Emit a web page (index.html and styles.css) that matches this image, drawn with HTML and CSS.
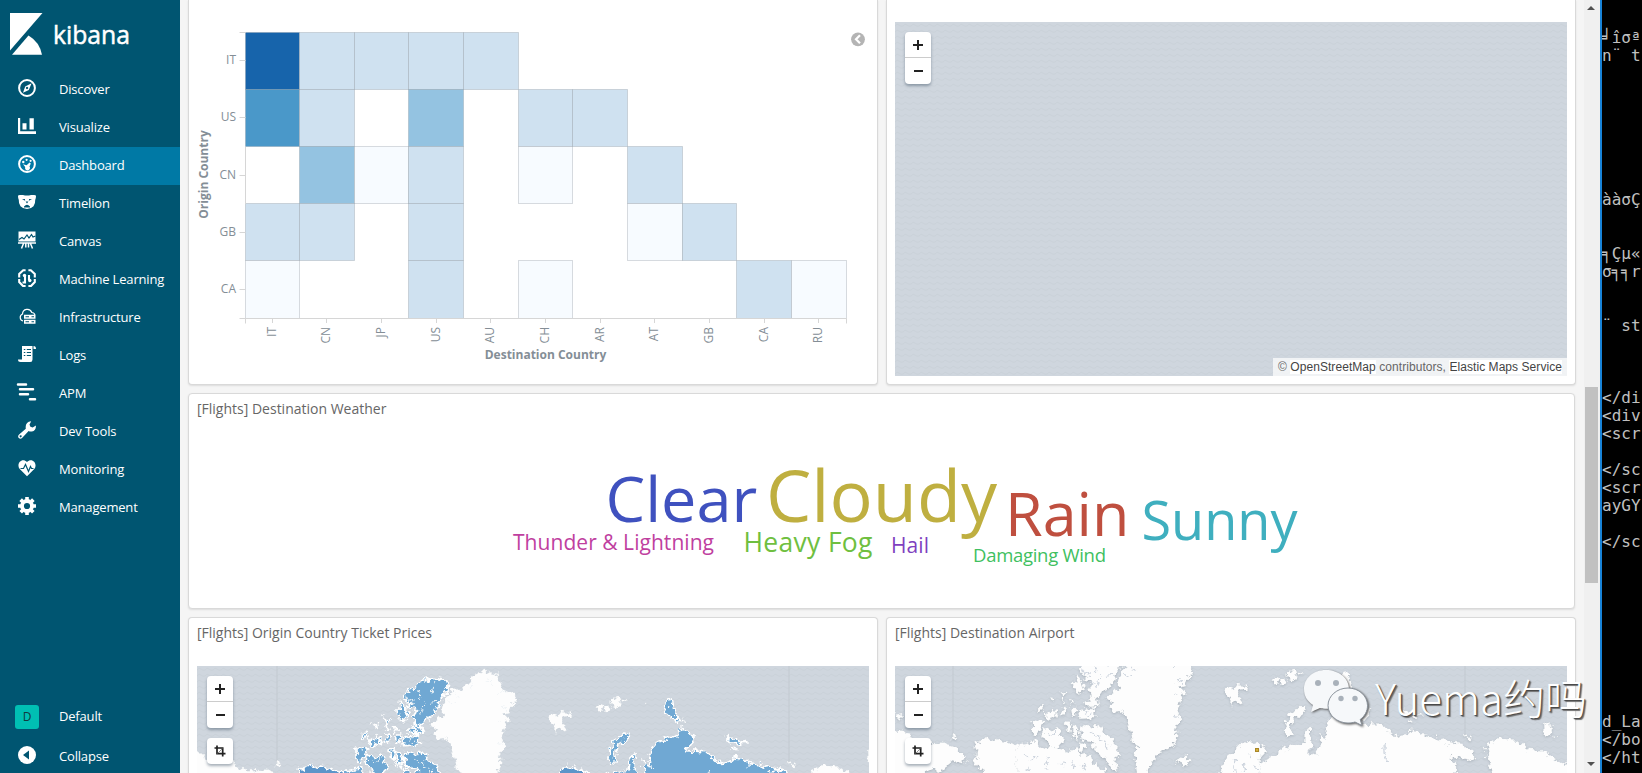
FILE: index.html
```
<!DOCTYPE html>
<html lang="en">
<head>
    <meta charset="UTF-8">
    <title>Kibana</title>
    <link rel="stylesheet" href="styles.css">
</head>
<body>
    <div class="app">
        <nav class="sidebar">
            <div class="logo">
                <svg width="150" height="70" viewBox="0 0 150 70">
                    <path d="M10 13h32.500L10 50.500z" fill="#fff"/>
                    <path d="M12 54.700L28.500 35.500Q39.500 42 42 54.700z" fill="#fff"/>
                    <text class="logo-text" x="53" y="43.500" textLength="77" lengthAdjust="spacingAndGlyphs">kibana</text>
                </svg>
            </div>
            <a class="nav-item"><svg class="icon" viewBox="0 0 18 18"><circle cx="9" cy="9" r="7.900" fill="none" stroke="#fff" stroke-width="2"/><path fill-rule="evenodd" d="M13.600 4.200L10.800 11 5 13.800 7.200 7.600zM9 7.800a1.200 1.200 0 1 0 .1 0z"/></svg><span>Discover</span></a>
            <a class="nav-item"><svg class="icon" viewBox="0 0 18 18"><path d="M0 1h2.200v13.300H18V17H0zM4.500 6.300h4v6.200h-4zM11.500 1.200h4.300v11.300h-4.300z"/></svg><span>Visualize</span></a>
            <a class="nav-item active"><svg class="icon" viewBox="0 0 18 18"><circle cx="9" cy="9" r="7.900" fill="none" stroke="#fff" stroke-width="2"/><circle cx="5.300" cy="7" r="1.200"/><circle cx="8.600" cy="4.800" r="1.100"/><circle cx="12.600" cy="5.800" r="1.100"/><path d="M5 9.200l3.600 1 3-2.600 1.200.8-1.300 3a2.500 2.500 0 1 1-4.300.6z"/></svg><span>Dashboard</span></a>
            <a class="nav-item"><svg class="icon" viewBox="0 0 18 18"><path fill-rule="evenodd" d="M0 3Q0 2 2 2h3q4 1 8 0h3q2 0 2 1 0 2-.8 4 .3 3.500-1.700 6.300Q13 16 9 16t-6.500-2.700Q.5 10.500.8 7 0 5 0 3zM4 6.300l3.200 1.400-.3-1.700zM14 6.300l-3.200 1.400.3-1.700zM7.600 8.600h2.800L9 10.400zM6 13.500q3-3.500 6 0v1H6z"/></svg><span>Timelion</span></a>
            <a class="nav-item"><svg class="icon" viewBox="0 0 18 18"><path d="M.5.500h17v10h-17z"/><path d="M0 12h18M5.700 12L3.500 17.500M12.300 12l2.200 5.500M7.800 12v4.500M10.500 12v4.500" stroke="#fff" stroke-width="1.500"/><path d="M1 8.500l3-2 2 1.500 3-4 2 3 2.500-3.500L15 6l2.500-1" fill="none" stroke="#005571" stroke-width="1.200"/></svg><span>Canvas</span></a>
            <a class="nav-item"><svg class="icon" viewBox="0 0 18 18"><g fill="none" stroke="#fff" stroke-width="2.100"><path d="M7.600 1.200H5.200L1.200 5v3.500M1.200 10v3L5 17h2.600M10.400 1.200h2.400l4 3.800v3.500M16.800 10v3L13 17h-2.600"/><path d="M7 7v6.500H4.500M11 11V6"/></g><circle cx="6.500" cy="6.500" r="1.700"/><circle cx="11.800" cy="11.500" r="1.700"/></svg><span>Machine Learning</span></a>
            <a class="nav-item"><svg class="icon" viewBox="0 0 18 18"><path d="M5 14A3.700 3.700 0 0 1 4.500 7a4.800 4.800 0 0 1 9.300-1.500q2.700.3 3 2.500" fill="none" stroke="#fff" stroke-width="1.200"/><path fill-rule="evenodd" d="M6 7.800h11.500v4H6zm1.500 1.500v1H11v-1zm6 0v1H16v-1zM6 12.800h11.500v4H6zm1.500 1.500v1H11v-1zm6 0v1H16v-1z"/></svg><span>Infrastructure</span></a>
            <a class="nav-item"><svg class="icon" viewBox="0 0 18 18"><path fill-rule="evenodd" d="M4 1h10.500v13.500q0 2.500-2.300 2.500H2.500Q0 17 0 14.500h4zM5.800 4v1h1.500V4zm3 0v1H13V4zm-3 3v1h1.500V7zm3 0v1H13V7zm-3 3v1h1.500v-1zm3 0v1H13v-1z"/><path d="M15.500 1q2.500 0 2.500 3h-2.500z"/></svg><span>Logs</span></a>
            <a class="nav-item"><svg class="icon wide" viewBox="0 0 18 18"><path d="M0 1.500h8M2 6.300h13M2 11.300h8M12 16.200h5" stroke="#fff" stroke-width="2.500" stroke-linecap="round"/></svg><span>APM</span></a>
            <a class="nav-item"><svg class="icon" viewBox="0 0 18 18"><path fill-rule="evenodd" d="M13.200.3L11.500 3.600l.9 2.200 2.300.6L17.900 4.500q.3 5-4 6-2 .3-3.300-.5L4.300 16.800q-1.800 1.700-3.500.2-1.500-1.800.3-3.400L7.800 7.700Q6.800 1 13.200.3zM2.600 14.300a1 1 0 1 0 .1 0z"/></svg><span>Dev Tools</span></a>
            <a class="nav-item"><svg class="icon" viewBox="0 0 18 18"><path d="M9 17.300L1.500 9.800C-2 4.500 4-1.800 9 3c5-4.800 11 1.500 7.500 6.800z"/><path d="M2.500 9.500h3L7.500 5.500l3 7 2-5 1 2h2" fill="none" stroke="#005571" stroke-width="1.200"/></svg><span>Monitoring</span></a>
            <a class="nav-item"><svg class="icon" viewBox="0 0 18 18"><circle cx="9" cy="9" r="5" fill="none" stroke="#fff" stroke-width="3.800"/><path d="M9 0v3M9 15v3M0 9h3M15 9h3M2.640 2.640l2 2M13.300 13.300l2 2M15.360 2.640l-2 2M4.700 13.300l-2 2" stroke="#fff" stroke-width="3.600"/></svg><span>Management</span></a>
            <div class="nav-bottom">
                <a class="nav-item space"><b class="avatar">D</b><span>Default</span></a>
                <a class="nav-item collapse"><svg class="icon" viewBox="0 0 18 18"><circle cx="9" cy="9" r="9"/><path d="M5 9l6-4.500v9z" fill="#005571"/></svg><span>Collapse</span></a>
            </div>
        </nav>

        <main class="dashboard">
            <div class="row row-top">
                <section class="panel">
                    <svg class="heatmap" id="heatmap" viewBox="189 0 688 384"></svg>
                </section>
                <section class="panel panel-map">
                    <div class="map map-full">
                        <svg class="map-svg" viewBox="0 0 672 354"><rect width="672" height="354" fill="url(#waves)"/></svg>
                        <div class="controls">
                            <div class="zoom"><i class="plus"></i><i class="minus"></i></div>
                        </div>
                        <div class="attribution">© <a>OpenStreetMap</a> contributors, <a>Elastic Maps Service</a></div>
                    </div>
                </section>
            </div>

            <section class="panel weather">
                <h3>[Flights] Destination Weather</h3>
                <svg class="cloud" viewBox="189 424 1385 184">
                    <text x="513" y="550" font-size="21" textLength="201" fill="#bf3f9f">Thunder &amp; Lightning</text>
                    <text x="605.500" y="522" font-size="63" fill="#3f51bf">Clear</text>
                    <text x="766" y="521.500" font-size="72" fill="#bfaf40">Cloudy</text>
                    <text x="1005" y="536" font-size="61" fill="#bf4f3f">Rain</text>
                    <text x="1141.500" y="540" font-size="54" fill="#3fafbf">Sunny</text>
                    <text x="743.500" y="552" font-size="26.500" textLength="129" fill="#6fbf40">Heavy Fog</text>
                    <text x="891" y="553" font-size="21" textLength="38" fill="#7f3fbf">Hail</text>
                    <text x="973" y="562" font-size="18.500" textLength="133" fill="#40bf60">Damaging Wind</text>
                </svg>
            </section>

            <div class="row row-bottom">
                <section class="panel">
                    <h3>[Flights] Origin Country Ticket Prices</h3>
                    <div class="map">
                        <svg class="map-svg" viewBox="0 0 672 107">
                            <defs>
                                <pattern id="waves" width="8" height="6" patternUnits="userSpaceOnUse">
                                    <rect width="8" height="6" fill="#cfd6de"/>
                                    <path d="M0 4q2-3 4-1t4 1" fill="none" stroke="#cad2d9" stroke-width="1"/>
                                </pattern>
                                <filter id="coast" x="-5%" y="-5%" width="110%" height="110%">
                                    <feTurbulence type="fractalNoise" baseFrequency=".055" numOctaves="3" seed="4"/>
                                    <feDisplacementMap in="SourceGraphic" scale="32" xChannelSelector="R" yChannelSelector="G"/>
                                </filter>
                                <!-- countries without flight data -->
                                <g id="land">
                                    <path d="M680 265L700 250 721 229 712 205 730 175 746 159 775 155 796 134 812 115 836 105 881 113 885 135 900 159 942 181 924 205 905 235 912 250 900 270 905 290 893 300 905 330 885 345 892 370 890 390 860 415 830 435 810 465 800 520H778L768 470 762 435 775 420 758 390 748 350 735 320 720 302 700 305 685 290 702 280z"/>
                                    <path d="M890 450L900 443 930 445 925 462 905 470z"/>
                                    <path d="M1035 235L1050 228 1058 240 1072 222 1100 225 1096 240 1075 243 1087 280 1070 275 1058 292 1046 265z"/>
                                    <path d="M-40 340L-19 344-4 349 0 365 70 365 95 380 110 400 155 400 185 398 220 410 245 430 260 450 235 460 222 447 195 470 190 485 160 475 130 489 100 530H-40z"/>
                                    <path d="M45 310L56 318 68 315 66 328 48 325zM215 380l14-3 2 6-14 2z"/>
                                    <path d="M1175 210l15-8 10 8-14 10zM1200 212l18-12 8 12-14 14zM1225 196l14-18 10 22-14 12zM1250 190l14-4 4 10zM1320 195l8 2-4 4zM1750 380l14-3 2 6-14 2z"/>
                                    <path d="M1815 410L1850 388 1910 393 1950 420 1990 425 2015 440 2040 460 2070 455V530H1850L1830 470z"/>
                                    <path d="M1990 345l22-8 4 20-10 22-14-5zM2020 380l12-4 2 8z"/>
                                    <path d="M1005 530L1020 480 1040 440 1055 430 1075 405 1110 390 1120 402 1138 398V530z"/>
                                </g>
                                <g id="alaska"><path d="M280 400L320 385 385 397 410 408V530H300L310 480 285 460 292 425z"/></g>
                                <g id="canada">
                                    <path d="M410 408L440 402 470 396 490 415 520 408 560 425 590 418 600 440 630 430 640 460 670 480 690 530H410z"/>
                                    <path d="M650 134L690 124 722 130 734 157 706 194 690 229 664 249 646 274 636 259 626 239 640 219 610 205 622 198 596 184 616 160 636 149z"/>
                                    <path d="M586 194L601 209 614 239 601 254 586 244 582 219z"/>
                                    <path d="M630 262l22 4 6 22-24 2zM592 296l20 5 10-7 24 2v28l-48 2zM612 280l20-6 15 8-12 8zM456 334l32 6-18 32-14 4zM490 352l20 8 22-12 20 41-22 26-35-20-11-21zM490 302l14 12 11-19 21 23-31 12zM465 302l21-22 6 8-22 22zM540 242l18 8-4 14zM546 294l12 2-2 22-12-4zM570 270l8 4-3 10zM570 294l14 0 2 28-12-6zM558 340l18 2-6 30-10-8zM581 344l20 6-10 46-12-20z"/>
                                    <path d="M610 345L635 352 660 345 668 370 692 385 700 405 722 430 705 440 700 455 718 480 690 470 670 440 640 420 640 395 605 385 600 365z"/>
                                    <path d="M508 262l14-4-4 10zM548 272l8-4 2 8zM600 395l18 12-8 25-16-12z"/>
                                </g>
                                <g id="russia">
                                    <path d="M1138 398L1160 435 1130 440 1140 462 1180 440 1210 415 1250 405 1275 398 1278 365 1293 350 1294 400 1285 430 1310 430 1322 405 1318 374 1338 389 1333 349 1358 319 1398 299 1418 299 1433 274 1463 294 1468 319 1448 341 1498 344 1528 359 1548 379 1583 374 1598 359 1628 379 1673 384 1708 397 1748 402 1775 420 1780 440 1760 450 1710 440 1730 460 1720 530H1138z"/>
                                    <path d="M1278 289L1248 296 1226 322 1212 364 1222 382 1235 374 1230 350 1246 322 1280 299z"/>
                                    <path d="M1387 192l17-2 6 23 10 27-24-2-12-22zM1413 244l24 5-19 14zM1568 302l28 4 32 13-52 2zM1584 333l14 6-6 6z"/>
                                </g>
                                <g id="norway"><path d="M1060 530L1068 400 1090 385 1108 388 1140 412 1170 440V530z"/></g>
                                <!-- fjords and lakes, cut out in sea colour -->
                                <g id="inlets">
                                    <path d="M608 185l28 10M640 160l14 26M690 140l-6 30M622 222l22-6M700 190l-24 4M660 205l-12 28M730 190l22 12M745 165l18 18M800 130l8 24M850 125l20 18M905 165l-26 4M912 215l-22-4M898 250l-18 4M896 320l-16-4M505 372l20 6M528 360l-8 16M630 365l16 14M655 372l12 24M676 392l14 20M612 305l22 6"/>
                                    <path d="M430 430l14 10M455 450l20-6M500 440l6 20M535 460l24 4M575 450l6 24M490 478l18 2M440 470l6 14M610 465l8 16M1070 450l-6 30M1090 465l4 18M1110 430l6 14M1120 470l10 8M1060 490l10-6M1295 405l-8 35M1515 400q-10 30 10 60"/>
                                </g>
                            </defs>
                            <rect width="672" height="107" fill="url(#waves)"/>
                            <path class="meridian" d="M80 0v98M592 0v97"/>
                            <g transform="translate(7 -29) scale(.3333)" filter="url(#coast)">
                                <use href="#land" class="land"/>
                                <use href="#alaska" class="country dark"/>
                                <use href="#canada" class="country"/>
                                <use href="#russia" class="country"/>
                                <use href="#norway" class="country dark"/>
                                <use href="#inlets" class="inlets light"/>
                            </g>
                        </svg>
                        <div class="controls">
                            <div class="zoom"><i class="plus"></i><i class="minus"></i></div>
                            <div class="crop"><svg width="12" height="12" viewBox="0 0 12 12"><path d="M3 .5v8.200h8.500M.5 3h8.200v8.500" fill="none" stroke="#222" stroke-width="1.700"/><path d="M3.500 8.500l5-5" stroke="#777" stroke-width=".8"/></svg></div>
                        </div>
                    </div>
                </section>
                <section class="panel panel-map">
                    <h3>[Flights] Destination Airport</h3>
                    <div class="map">
                        <svg class="map-svg" viewBox="0 0 672 107">
                            <rect width="672" height="107" fill="url(#waves)"/>
                            <path class="meridian" d="M58 0v71M570 0v71"/>
                            <g class="relief">
                                <g transform="translate(-15 -56) scale(.3333)" filter="url(#coast)" class="land">
                                    <use href="#land"/>
                                    <use href="#alaska"/>
                                    <use href="#canada"/>
                                    <use href="#russia"/>
                                    <use href="#inlets" class="inlets"/>
                                </g>
                            </g>
                            <rect class="airport" x="360.500" y="82.500" width="3" height="3"/>
                        </svg>
                        <div class="controls">
                            <div class="zoom"><i class="plus"></i><i class="minus"></i></div>
                            <div class="crop"><svg width="12" height="12" viewBox="0 0 12 12"><path d="M3 .5v8.200h8.500M.5 3h8.200v8.500" fill="none" stroke="#222" stroke-width="1.700"/><path d="M3.500 8.500l5-5" stroke="#777" stroke-width=".8"/></svg></div>
                        </div>
                    </div>
                </section>
            </div>
        </main>

        <div class="scrollbar">
            <i class="arrow up"></i>
            <div class="thumb"></div>
            <i class="arrow down"></i>
        </div>

        <pre class="terminal">
╛îσª
n¨ t







ààσÇ


╕Çµ«
σ╕╕r


¨ st



&lt;/di
&lt;div
&lt;scr

&lt;/sc
&lt;scr
ayGY

&lt;/sc









d_La
&lt;/bo
&lt;/ht</pre>
    </div>

    <div class="watermark">
        <svg width="68" height="60" viewBox="0 0 68 60">
            <path d="M25 2C12 2 3 10.500 3 21c0 7 3 12 9 16L10 44l9-4c2 .6 4 .8 7 .8 12 0 22-9 22-20S37 2 25 2z"/>
            <circle class="eye" cx="17" cy="15" r="3"/><circle class="eye" cx="35" cy="15" r="3"/>
            <path class="front" d="M47 20c-11 0-20 8-20 17.500S36 55 47 55c3 0 5-.4 7-1l7 3.500-1.800-6C64 48 66.500 43 66.500 37.500 66.500 28 58 20 47 20z"/>
            <circle class="eye" cx="40" cy="30.500" r="2.700"/><circle class="eye" cx="54" cy="30.500" r="2.700"/>
        </svg>
        <span>Yuema约吗</span>
    </div>

    <script>
        const cols = ['IT', 'CN', 'JP', 'US', 'AU', 'CH', 'AR', 'AT', 'GB', 'CA', 'RU'];
        const rows = ['IT', 'US', 'CN', 'GB', 'CA'];
        const levels = ['41111', '31.2.11', '.201.0.1', '11.1...01', '0..1.0...10'];
        const colors = ['#f7fbff', '#cfe1f0', '#94c3e1', '#4a98c9', '#1764ab'];
        const left = 245, top0 = 32, w = 54.64, h = 57.2;

        let out = '';
        levels.forEach((line, r) => {
            [...line].forEach((v, c) => {
                if (v === '.') return;
                const x = Math.floor(left + c * w) + 0.5;
                const y = Math.floor(top0 + r * h) + 0.5;
                const x2 = Math.floor(left + (c + 1) * w) + 0.5;
                const y2 = Math.floor(top0 + (r + 1) * h) + 0.5;
                out += `<rect class="cell" x="${x}" y="${y}" width="${x2 - x}" height="${y2 - y}" fill="${colors[v]}"/>`;
            });
        });

        // axes
        out += `<path class="axis" d="M239.500 32.500h6M245.500 147v57M239.500 318.500h6M245.500 323.500v-5H846.500v5"/>`;
        rows.forEach((t, r) => {
            const y = Math.floor(top0 + (r + 0.5) * h);
            out += `<path class="axis" d="M239.500 ${y + 0.5}h6"/><text class="tick" x="236" y="${y + 3.5}" text-anchor="end">${t}</text>`;
        });
        cols.forEach((t, c) => {
            const x = Math.floor(left + (c + 0.5) * w);
            out += `<path class="axis" d="M${x + 0.5} 318v5"/><text class="tick" transform="translate(${x + 3.5} 327) rotate(-90)" text-anchor="end">${t}</text>`;
        });
        out += `<text class="axis-title" x="545.500" y="359" text-anchor="middle">Destination Country</text>`;
        out += `<text class="axis-title" transform="translate(208 174.500) rotate(-90)" text-anchor="middle">Origin Country</text>`;

        // legend toggle
        out += `<circle cx="858" cy="39.300" r="6.900" fill="#b4b4b4"/><path d="M860 35.300l-4 4 4 4" fill="none" stroke="#fff" stroke-width="2.200"/>`;
        document.querySelector('#heatmap').innerHTML = out;
    </script>
</body>
</html>
```
FILE: styles.css
```
* {
    box-sizing: border-box;
}
body {
    margin: 0;
    font-family: "Open Sans", sans-serif;
    background-color: #f5f5f5;
    overflow: hidden;
}
.app {
    display: flex;
    width: 1642px;
    height: 773px;
    overflow: hidden;
}

/* sidebar */
.sidebar {
    width: 180px;
    flex-shrink: 0;
    display: flex;
    flex-direction: column;
    background-color: #005571;
    color: #fff;
}
.logo {
    height: 71px;
}
.logo-text {
    font-size: 26px;
    font-weight: 500;
    fill: #fff;
    stroke: #fff;
    stroke-width: 0.5px;
}
.nav-item {
    display: flex;
    align-items: center;
    height: 38px;
    padding: 0 0 1px 18px;
    font-size: 13px;
    letter-spacing: -0.18px;
    flex-shrink: 0;
}
.nav-item.active {
    margin-top: -1px;
    height: 39px;
    background: linear-gradient(#0079a5, #0079a5) 0 1px no-repeat;
}
.nav-item span {
    margin-top: -1px;
}
.icon {
    width: 18px;
    height: 18px;
    margin: -3px 23px 0 0;
    fill: #fff;
}
.icon.wide {
    overflow: visible;
}
.nav-bottom {
    margin-top: auto;
}
.nav-item.space {
    padding-left: 15px;
    height: 40px;
}
.nav-item.collapse {
    height: 36px;
    padding-bottom: 0;
}
.collapse .icon {
    margin-top: -1px;
}
.collapse span {
    margin-top: 2px;
}
.avatar {
    width: 24px;
    height: 24px;
    margin-right: 20px;
    border-radius: 3px;
    background-color: #00bfb3;
    color: #123a40;
    font-size: 12px;
    font-weight: 400;
    line-height: 24px;
    text-align: center;
}

/* dashboard */
.dashboard {
    width: 1404px;
    flex-shrink: 0;
    display: flex;
    flex-direction: column;
    gap: 8px;
    padding: 0 8px;
}
.row {
    display: flex;
    gap: 8px;
    flex-shrink: 0;
}
.row-top {
    height: 385px;
}
.row-bottom {
    height: 170px;
}
.panel {
    width: 690px;
    flex-shrink: 0;
    background-color: #fff;
    border: 1px solid #d9d9d9;
    border-radius: 4px;
    box-shadow: 0 1px 2px rgba(0, 0, 0, 0.1);
}
.row-top .panel {
    border-top: none;
    border-radius: 0 0 4px 4px;
}
.row-bottom .panel {
    border-bottom: none;
    border-radius: 4px 4px 0 0;
}
.panel h3 {
    margin: 0;
    padding: 0 8px;
    height: 30px;
    line-height: 29px;
    font-size: 14px;
    font-weight: 400;
    color: #666;
}
.weather {
    width: 1387px;
    height: 216px;
}
.heatmap {
    display: block;
    width: 688px;
    height: 384px;
}
.cell {
    stroke: rgba(130, 140, 150, 0.3);
}
.axis {
    fill: none;
    stroke: #d6d6d6;
}
.tick {
    font-size: 12px;
    fill: #848e96;
}
.axis-title {
    font-size: 12px;
    font-weight: 700;
    fill: #848e96;
}
.cloud {
    display: block;
    width: 1385px;
    height: 184px;
}

/* maps */
.map {
    position: relative;
    width: 672px;
    height: 107px;
    margin: 18px 0 0 8px;
}
.map-full {
    height: 354px;
    margin-top: 22px;
}
.map-svg {
    display: block;
    width: 100%;
    height: 100%;
}
.meridian {
    stroke: #c2c9d0;
    fill: none;
}
.land {
    fill: #fdfdfd;
    stroke: #f4f5f6;
    stroke-width: 1;
}
.relief {
    filter: drop-shadow(0 1px 1px rgba(140, 150, 160, 0.5));
}
.country {
    fill: #6fa8d3;
    stroke: #fff;
    stroke-width: 5;
}
.country.dark {
    fill: #5b95c9;
}
.inlets {
    fill: none;
    stroke: #cfd6df;
    stroke-width: 4;
}
.inlets.light {
    stroke: #f0f4f7;
    stroke-width: 3;
}
.airport {
    fill: #d6b03a;
    stroke: #a8872a;
}
.controls {
    position: absolute;
    top: 10px;
    left: 10px;
}
.zoom,
.crop {
    width: 26px;
    background-color: #fff;
    border-radius: 4px;
    box-shadow: 0 2px 3px rgba(60, 80, 100, 0.45);
}
.zoom {
    height: 52px;
}
.zoom i {
    display: flex;
    align-items: center;
    justify-content: center;
    height: 26px;
}
.plus {
    border-bottom: 1px solid #ccc;
}
.plus::before {
    content: "";
    width: 10px;
    height: 10px;
    background: linear-gradient(#222, #222) center / 10px 2px no-repeat, linear-gradient(#222, #222) center / 2px 10px no-repeat;
}
.minus::before {
    content: "";
    width: 9px;
    height: 2px;
    margin-left: 1px;
    background-color: #222;
}
.crop {
    display: flex;
    align-items: center;
    justify-content: center;
    height: 26px;
    margin-top: 10px;
}
.attribution {
    position: absolute;
    right: 0;
    bottom: 0;
    height: 18px;
    padding: 0 5px;
    line-height: 18px;
    font-family: "Liberation Sans", Arial, sans-serif;
    font-size: 12px;
    letter-spacing: 0.06px;
    color: #666;
    background-color: rgba(255, 255, 255, 0.7);
    white-space: nowrap;
}
.attribution a {
    color: #444;
    background-color: #fff;
}

/* scrollbar and the window behind */
.scrollbar {
    width: 16px;
    flex-shrink: 0;
    display: flex;
    flex-direction: column;
    align-items: center;
    background-color: #f0f0f0;
}
.arrow {
    border: 4px solid transparent;
    margin-right: 2px;
}
.arrow.up {
    margin-top: 2px;
    border-bottom-color: #505050;
}
.arrow.down {
    margin: auto 2px 3px 0;
    border-top-color: #505050;
}
.thumb {
    width: 13px;
    height: 196px;
    margin: 377px 2px 0 0;
    background-color: #c1c1c1;
}
.terminal {
    flex: 1;
    margin: 0;
    padding-top: 29px;
    border-left: 2px solid #1883d7;
    background-color: #000;
    color: #c0c0c0;
    font-family: "DejaVu Sans Mono", monospace;
    font-size: 16px;
    line-height: 18px;
    overflow: hidden;
}

.watermark {
    position: absolute;
    left: 1301px;
    top: 668px;
    display: flex;
    color: #fff;
    font-family: "Noto Sans CJK SC", sans-serif;
    font-size: 42px;
    font-weight: 300;
    line-height: 60px;
    text-shadow: 1px 1px 1px #444, 2px 2px 1px #777;
    white-space: nowrap;
}
.watermark svg {
    margin-right: 6px;
    fill: #f6f8fa;
    filter: drop-shadow(1px 1px 1px #555);
}
.watermark .front {
    stroke: #8b939c;
    stroke-width: 1;
}
.watermark span {
    margin-top: -1px;
}
.watermark .eye {
    fill: #a9b1ba;
}
```
